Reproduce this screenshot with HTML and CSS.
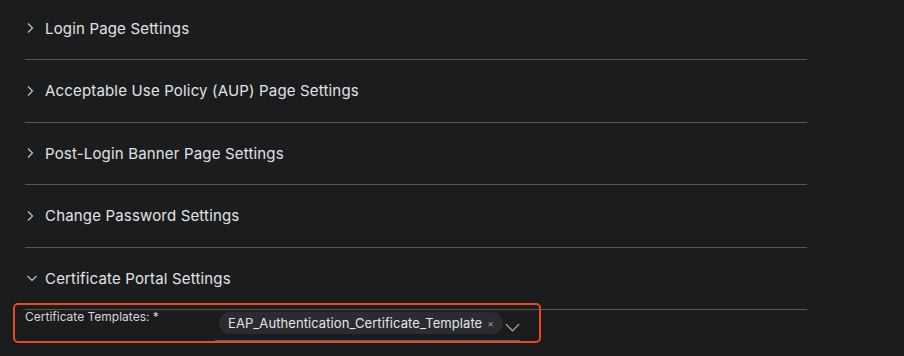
FILE: index.html
```html
<!DOCTYPE html>
<html lang="en">
<head>
  <meta charset="UTF-8" />
  <title>Portal Settings</title>
  <link rel="stylesheet" href="styles.css">
</head>
<body>
  <div class="settings">
    <div class="section">
      <div class="section-head">
        <svg class="chev" width="10" height="10" viewBox="0 0 10 10"><path d="M1 0.5 L5.5 5 L1 9.5" /></svg>
        <span>Login Page Settings</span>
      </div>
    </div>
    <div class="section">
      <div class="section-head">
        <svg class="chev" width="10" height="10" viewBox="0 0 10 10"><path d="M1 0.5 L5.5 5 L1 9.5" /></svg>
        <span>Acceptable Use Policy (AUP) Page Settings</span>
      </div>
    </div>
    <div class="section">
      <div class="section-head">
        <svg class="chev" width="10" height="10" viewBox="0 0 10 10"><path d="M1 0.5 L5.5 5 L1 9.5" /></svg>
        <span>Post-Login Banner Page Settings</span>
      </div>
    </div>
    <div class="section">
      <div class="section-head">
        <svg class="chev" width="10" height="10" viewBox="0 0 10 10"><path d="M1 0.5 L5.5 5 L1 9.5" /></svg>
        <span>Change Password Settings</span>
      </div>
    </div>
    <div class="section open">
      <div class="section-head">
        <svg class="chev" width="10" height="10" viewBox="0 0 10 10"><path d="M0.5 3 L5 7.5 L9.5 3" /></svg>
        <span>Certificate Portal Settings</span>
      </div>
      <div class="form-row">
        <label class="field-label">Certificate Templates: *</label>
        <div class="multi-select">
          <span class="chip">EAP_Authentication_Certificate_Template <span class="chip-x">×</span></span>
          <svg class="drop" width="16" height="9" viewBox="0 0 16 9"><path d="M1 1 L8 8 L15 1" /></svg>
        </div>
        <div class="highlight"></div>
      </div>
    </div>
  </div>
</body>
</html>
```

FILE: styles.css
```css
html, body {
  margin: 0;
  background-color: #1b1c1e;
}
body {
  font-family: Inter, "Liberation Sans", Arial, sans-serif;
  color: #e2e3e5;
  width: 904px;
  height: 356px;
  overflow: hidden;
}
.settings {
  margin-top: -2.5px;
  margin-left: 25px;
  width: 782px;
}
.section-head {
  height: 62.5px;
  display: flex;
  align-items: center;
  border-bottom: 1px solid #4f5c5a;
  font-size: 15px;
  letter-spacing: 0.17px;
  padding-left: 2px;
  box-sizing: border-box;
}
.chev {
  fill: none;
  stroke: #c4c6c9;
  stroke-width: 1.2;
  margin-right: 8px;
}
.form-row {
  position: relative;
  display: flex;
}
.field-label {
  width: 190px;
  font-size: 12px;
  color: #d6d7d9;
  line-height: 14px;
}
.multi-select {
  width: 305px;
  height: 31px;
  display: flex;
  align-items: flex-start;
  border-bottom: 1px solid #5b5f64;
  padding-left: 4px;
  box-sizing: border-box;
}
.chip {
  display: inline-flex;
  align-items: center;
  height: 22px;
  margin-top: 2px;
  padding: 0 9px 0 9px;
  border-radius: 11px;
  background-color: #2a2c30;
  font-size: 13px;
  letter-spacing: 0.08px;
  color: #e4e5e7;
  white-space: nowrap;
}
.chip-x {
  font-size: 10px;
  color: #9a9ca0;
  margin-left: 5px;
}
.drop {
  fill: none;
  stroke: #c4c6c9;
  stroke-width: 1.2;
  margin-left: 2px;
  margin-top: 13px;
}
.highlight {
  position: absolute;
  left: -12px;
  top: -7px;
  width: 528px;
  height: 40px;
  border: 2px solid #ee4527;
  border-radius: 5px;
  box-sizing: border-box;
}
```
